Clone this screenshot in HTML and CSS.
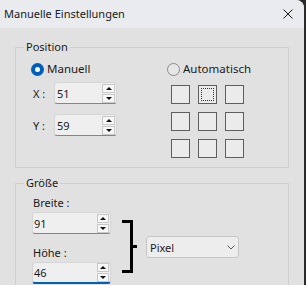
FILE: index.html
```html
<!DOCTYPE html>
<html lang="de">
  <head>
    <meta charset="UTF-8" />
    <title>Manuelle Einstellungen</title>
    <link rel="stylesheet" href="styles.css">
  </head>
  <body>
    <div class="window">
      <div class="titlebar">
        <span class="title">Manuelle Einstellungen</span>
        <svg class="close" width="10" height="10" viewBox="0 0 10 10">
          <path d="M0.5 0.5 L9.5 9.5 M9.5 0.5 L0.5 9.5" stroke="#1b1b1b" stroke-width="1" fill="none" />
        </svg>
      </div>
      <div class="content">
        <fieldset class="group group-pos">
          <legend>Position</legend>
          <div class="pos-cols">
            <div class="col-manual">
              <label class="radio"><span class="dot on"></span>Manuell</label>
              <div class="field-row">
                <span class="axis">X :</span>
                <div class="spin">
                  <span class="val">51</span>
                  <span class="arrows"><span class="arrow up"></span><span class="arrow down"></span></span>
                </div>
              </div>
              <div class="field-row second">
                <span class="axis">Y :</span>
                <div class="spin">
                  <span class="val">59</span>
                  <span class="arrows"><span class="arrow up"></span><span class="arrow down"></span></span>
                </div>
              </div>
            </div>
            <div class="col-auto">
              <label class="radio"><span class="dot"></span>Automatisch</label>
              <div class="anchors">
                <span class="cell"></span>
                <span class="cell focus"><span></span></span>
                <span class="cell"></span>
                <span class="cell"></span>
                <span class="cell"></span>
                <span class="cell"></span>
                <span class="cell"></span>
                <span class="cell"></span>
                <span class="cell"></span>
              </div>
            </div>
          </div>
        </fieldset>
        <fieldset class="group group-size">
          <legend>Größe</legend>
          <div class="size-cols">
            <div class="col-dims">
              <div class="cap">Breite :</div>
              <div class="spin wide">
                <span class="val">91</span>
                <span class="arrows"><span class="arrow up"></span><span class="arrow down"></span></span>
              </div>
              <div class="cap second">Höhe :</div>
              <div class="spin wide focused">
                <span class="val">46</span>
                <span class="arrows"><span class="arrow up"></span><span class="arrow down"></span></span>
              </div>
            </div>
            <div class="bracket"><span class="bar"></span><span class="tick"></span></div>
            <div class="combo">
              <span>Pixel</span>
              <svg width="8" height="5" viewBox="0 0 8 5">
                <path d="M0.5 0.5 L4 4 L7.5 0.5" stroke="#5a5a5a" stroke-width="1" fill="none" />
              </svg>
            </div>
          </div>
        </fieldset>
      </div>
    </div>
  </body>
</html>
```

FILE: styles.css
```css
body {
  margin: 0;
  padding: 0;
  background: #2b2b2b;
  font-family: "Noto Sans", sans-serif;
  color: #1a1a1a;
}
.window {
  width: 304px;
  height: 285px;
  background: #e1e1e1;
  border-top-right-radius: 8px;
  overflow: hidden;
}
.titlebar {
  height: 28px;
  background: #e9ebee;
  display: flex;
  align-items: center;
  justify-content: space-between;
  padding: 0 11px 0 4px;
}
.title {
  font-size: 11px;
  line-height: 28px;
}
.content {
  padding: 11px 0 0 15px;
}
.group {
  margin: 0;
  padding: 0 8px 9px;
  border: 1px solid #cfcfcf;
  width: 274px;
  box-sizing: border-box;
  min-width: 0;
}
.group legend {
  padding: 0 2px;
  font-size: 11px;
  line-height: 16px;
}
.group-size {
  margin-top: 7px;
  padding-bottom: 20px;
}
.pos-cols {
  display: flex;
  padding: 6px 0 0 7px;
}
.col-manual {
  width: 136px;
}
.radio {
  display: flex;
  align-items: center;
  gap: 3px;
  height: 16px;
  font-size: 11.5px;
  line-height: 16px;
}
.dot {
  width: 13px;
  height: 13px;
  border-radius: 50%;
  border: 1px solid #8a8a8a;
  box-sizing: border-box;
  background: #e6e6e6;
  display: flex;
  align-items: center;
  justify-content: center;
}
.dot.on {
  border: none;
  background: #005fb8;
}
.dot.on::after {
  content: "";
  width: 5px;
  height: 5px;
  border-radius: 50%;
  background: #ffffff;
}
.field-row {
  display: flex;
  align-items: center;
  margin-top: 5px;
}
.field-row.second {
  margin-top: 10px;
}
.axis {
  width: 23px;
  padding-left: 2px;
  box-sizing: border-box;
  font-size: 11px;
}
.spin {
  width: 63px;
  height: 22px;
  display: flex;
  align-items: center;
  justify-content: space-between;
  background: #efefef;
  border: 1px solid #d6d6d6;
  border-bottom-color: #868686;
  border-radius: 3px;
  box-sizing: border-box;
  padding: 0 1px 0 2px;
  font-size: 11px;
}
.spin.wide {
  width: 79px;
  margin-top: 2px;
  padding-left: 1px;
}
.spin.focused {
  border-bottom: 2px solid #005fb8;
}
.arrows {
  display: flex;
  flex-direction: column;
  gap: 1px;
}
.arrow {
  width: 13px;
  height: 9px;
  border: 1px solid #c8c8c8;
  background: #f7f7f7;
  box-sizing: border-box;
  display: flex;
  align-items: center;
  justify-content: center;
}
.spin.wide .arrow {
  width: 12px;
}
.arrow::after {
  content: "";
  border-left: 3px solid transparent;
  border-right: 3px solid transparent;
}
.arrow.up::after {
  border-bottom: 3px solid #111111;
}
.arrow.down::after {
  border-top: 3px solid #111111;
}
.anchors {
  display: grid;
  grid-template-columns: repeat(3, 19px);
  grid-auto-rows: 19px;
  gap: 8px;
  margin: 8px 0 0 4px;
}
.cell {
  border: 1px solid #5e5e5e;
  background: #ebebeb;
  box-sizing: border-box;
}
.cell.focus {
  padding: 2px;
}
.cell.focus span {
  display: block;
  height: 100%;
  border: 1px dotted #333333;
  box-sizing: border-box;
}
.size-cols {
  display: flex;
  align-items: flex-start;
  padding: 5px 0 0 8px;
}
.col-dims {
  width: 79px;
}
.cap {
  font-size: 11px;
  line-height: 14px;
  padding-left: 1px;
}
.cap.second {
  margin-top: 12px;
}
.bracket {
  display: flex;
  align-items: center;
  margin: 24px 0 0 11px;
}
.bracket .bar {
  width: 11px;
  height: 53px;
  border: 3px solid #000000;
  border-left: none;
  box-sizing: border-box;
}
.bracket .tick {
  width: 4px;
  height: 3px;
  background: #000000;
}
.combo {
  width: 93px;
  height: 22px;
  margin: 40px 0 0 9px;
  display: flex;
  align-items: center;
  justify-content: space-between;
  padding: 0 3px 0 3px;
  background: #ededed;
  border: 1px solid #c6c6c6;
  border-radius: 3px;
  box-sizing: border-box;
  font-size: 11px;
}
```
